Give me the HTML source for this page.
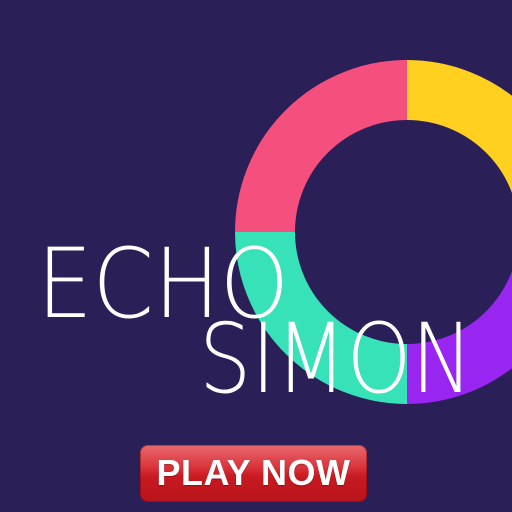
<!DOCTYPE html>
<html><head><style>
html,body{margin:0;padding:0;background:#2a1f57;}
body{width:512px;height:512px;overflow:hidden;position:relative;}
.btn{position:absolute;left:140px;top:445px;width:227px;height:57px;border-radius:8px;
background:linear-gradient(#e96a6f 0%,#d9323a 40%,#c81a22 55%,#b8141b 100%);box-shadow:inset 0 0 0 1px rgba(120,0,0,.4);}
.btn span{position:absolute;left:0;right:0;top:7px;text-align:center;color:#fff;font:bold 36px "Liberation Sans",sans-serif;letter-spacing:0.5px;text-shadow:0 1px 1px rgba(0,0,0,.3);}
</style></head><body>
<svg width="512" height="512" style="position:absolute;left:0;top:0">
<g fill="none" stroke-width="60">
<path d="M407 90 A142 142 0 0 1 549 232" stroke="#ffd020"/>
<path d="M549 232 A142 142 0 0 1 407 374" stroke="#9926f0"/>
<path d="M407 374 A142 142 0 0 1 265 232" stroke="#37e2b8"/>
<path d="M265 232 A142 142 0 0 1 407 90" stroke="#f5507d"/>
</g>
<g fill="#fff" font-family="DejaVu Sans, Liberation Sans, sans-serif" font-weight="200" font-size="96">
<text x="37" y="317" textLength="252" lengthAdjust="spacingAndGlyphs">ECHO</text>
<text x="199" y="392" textLength="274" lengthAdjust="spacingAndGlyphs">SIMON</text>
</g>
</svg>
<div class="btn"><span>PLAY NOW</span></div>
</body></html>
